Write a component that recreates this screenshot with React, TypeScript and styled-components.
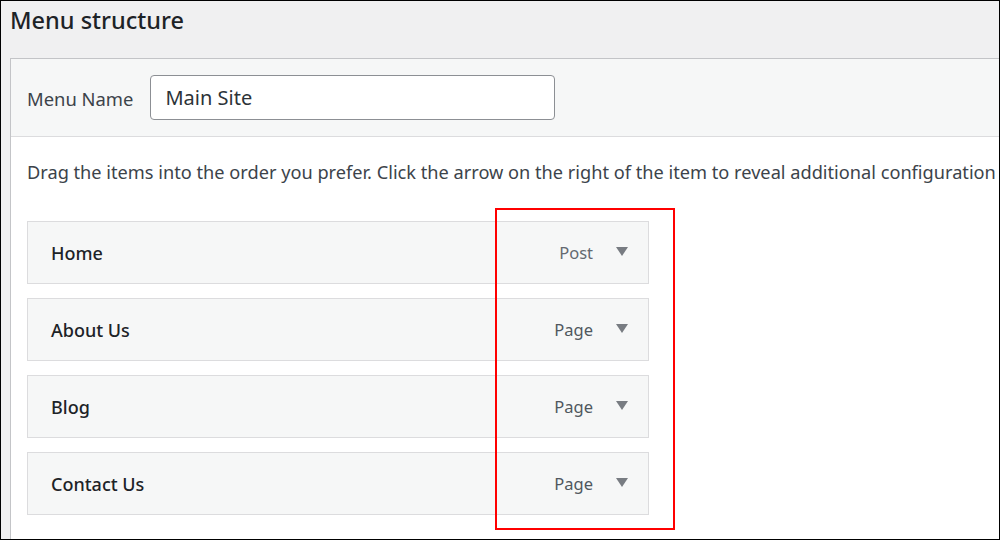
import React from "react";
import styled, { createGlobalStyle } from "styled-components";

const GlobalStyle = createGlobalStyle`
  html, body {
    margin: 0;
    padding: 0;
    background: #fff;
  }
  * {
    box-sizing: border-box;
  }
`;

const Frame = styled.div`
  position: relative;
  width: 1000px;
  height: 540px;
  border: 1px solid #000;
  background: #f0f0f1;
  overflow: hidden;
  display: flex;
  flex-direction: column;
  padding-left: 9px;
  font-family: "Noto Sans", "Open Sans", sans-serif;
`;

const Title = styled.h2`
  margin: 0;
  height: 57px;
  padding-top: 3px;
  font-size: 23.5px;
  font-weight: 500;
  color: #1d2327;
`;

const Panel = styled.div`
  flex: 1;
  margin-right: -20px;
  background: #fff;
  border-left: 1px solid #c3c4c7;
  border-top: 1px solid #c3c4c7;
  display: flex;
  flex-direction: column;
  overflow: hidden;
`;

const PanelHeader = styled.div`
  height: 78px;
  background: #f6f7f7;
  border-bottom: 1px solid #dcdcde;
  display: flex;
  align-items: center;
  gap: 17px;
  padding-left: 16px;
`;

const Label = styled.label`
  font-size: 18.4px;
  color: #3c434a;
  margin-top: 1px;
`;

const NameInput = styled.input`
  width: 405px;
  height: 45px;
  border: 1px solid #8c8f94;
  border-radius: 4px;
  background: #fff;
  padding: 0 14px;
  font-family: inherit;
  font-size: 20px;
  color: #2c3338;
  outline: none;
`;

const Body = styled.div`
  padding: 23px 16px 0 16px;
`;

const Hint = styled.p`
  margin: 0 0 37px 0;
  font-size: 18.2px;
  color: #3c434a;
  white-space: nowrap;
`;

const List = styled.ul`
  list-style: none;
  margin: 0;
  padding: 0;
  display: flex;
  flex-direction: column;
  gap: 14px;
`;

const Item = styled.li`
  width: 622px;
  height: 63px;
  background: #f6f7f7;
  border: 1px solid #dcdcde;
  display: flex;
  align-items: center;
  padding: 0 20px 0 23px;
`;

const ItemTitle = styled.span`
  flex: 1;
  font-size: 18px;
  font-weight: 500;
  color: #1d2327;
`;

const ItemType = styled.span<{ $muted?: boolean }>`
  font-size: 16.5px;
  color: ${(p) => (p.$muted ? "#646970" : "#50575e")};
  margin-right: 23px;
`;

const Arrow = styled.span`
  width: 0;
  height: 0;
  border-left: 6px solid transparent;
  border-right: 6px solid transparent;
  border-top: 9px solid #787c82;
  margin-top: -2px;
`;

const Highlight = styled.div`
  position: absolute;
  left: 494px;
  top: 207px;
  width: 180px;
  height: 322px;
  border: 2px solid #f00;
  pointer-events: none;
`;

const items = [
  { title: "Home", type: "Post" },
  { title: "About Us", type: "Page" },
  { title: "Blog", type: "Page" },
  { title: "Contact Us", type: "Page" },
];

export default function App() {
  return (
    <>
      <GlobalStyle />
      <Frame>
        <Title>Menu structure</Title>
        <Panel>
          <PanelHeader>
            <Label>Menu Name</Label>
            <NameInput defaultValue="Main Site" />
          </PanelHeader>
          <Body>
            <Hint>
              Drag the items into the order you prefer. Click the arrow on the right of the item to reveal additional configuration options.
            </Hint>
            <List>
              {items.map((it) => (
                <Item key={it.title}>
                  <ItemTitle>{it.title}</ItemTitle>
                  <ItemType $muted={it.type === "Post"}>{it.type}</ItemType>
                  <Arrow />
                </Item>
              ))}
            </List>
          </Body>
        </Panel>
        <Highlight />
      </Frame>
    </>
  );
}
